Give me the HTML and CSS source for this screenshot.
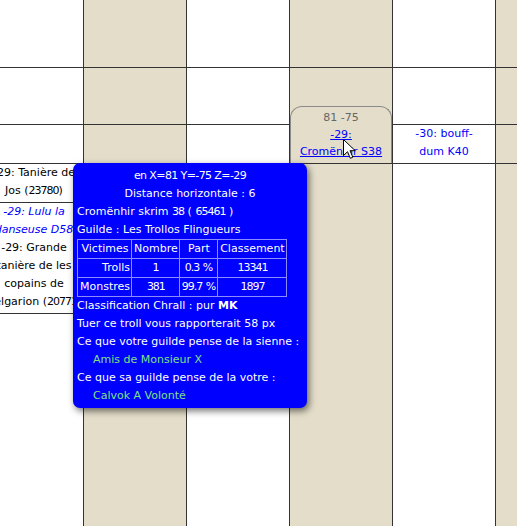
FILE: index.html
```html
<!DOCTYPE html>
<html lang="fr">
<head>
<meta charset="utf-8">
<title>Vue</title>
<link rel="stylesheet" href="styles.css">
</head>
<body>
<div class="view">
<div class="board">
  <div class="cell w"></div><div class="cell b"></div><div class="cell w"></div><div class="cell b"></div><div class="cell w"></div><div class="cell b"></div>

  <div class="cell w"></div><div class="cell b"></div><div class="cell w"></div><div class="cell b"></div><div class="cell w"></div><div class="cell b"></div>

  <div class="cell w"></div>
  <div class="cell b"></div>
  <div class="cell w"></div>
  <div class="cell b hl">
    <div class="hover">
      <div class="coords">81 -75</div>
      <a class="lnk" href="#">-29:<br>Cromënhir S38</a>
    </div>
  </div>
  <div class="cell w"><div class="blue">-30: bouff-<br>dum K40</div></div>
  <div class="cell b"></div>

  <div class="cell w">
    <div class="item">-29: Tanière de<br>Jos (<span class="n">23780</span>)</div>
    <div class="item">
      <div class="blue it">-29: Lulu la<br>danseuse D58</div>
      <div>-29: Grande<br>tanière de les<br>copains de<br>Belgarion (<span class="n">20771</span>)</div>
    </div>
  </div>
  <div class="cell b"></div>
  <div class="cell w"></div>
  <div class="cell b"></div>
  <div class="cell w"></div>
  <div class="cell b"></div>
</div>

<div class="tip">
  <div class="ctr tight">en X=81 Y=-75 Z=-29</div>
  <div class="ctr">Distance horizontale : 6</div>
  <div>Cromënhir skrim <span class="n">38</span> ( <span class="n">65461</span> )</div>
  <div>Guilde : Les Trollos Flingueurs</div>
  <table class="stats">
    <tr><td>Victimes</td><td>Nombre</td><td>Part</td><td>Classement</td></tr>
    <tr><td class="r">Trolls</td><td>1</td><td><span class="n">0.3</span> %</td><td><span class="n">13341</span></td></tr>
    <tr><td>Monstres</td><td><span class="n">381</span></td><td><span class="n">99.7</span> %</td><td><span class="n">1897</span></td></tr>
  </table>
  <div>Classification Chrall : pur <b>MK</b></div>
  <div>Tuer ce troll vous rapporterait 58 px</div>
  <div>Ce que votre guilde pense de la sienne :</div>
  <div class="g">Amis de Monsieur X</div>
  <div>Ce que sa guilde pense de la votre :</div>
  <div class="g">Calvok A Volonté</div>
</div>

<svg class="cursor" width="14" height="21" viewBox="0 0 14 21" aria-hidden="true">
  <path d="M0.5 0.5 L0.5 16.5 L4.5 12.7 L7.3 19.3 L9.8 18.2 L7 11.7 L12.2 11.7 Z" fill="#fff" stroke="#000" stroke-width="1" stroke-linejoin="miter"/>
</svg>
</div>
</body>
</html>
```

FILE: styles.css
```css
html, body {
  margin: 0;
  padding: 0;
  overflow: hidden;
  background: #fff;
}

body {
  font-family: "DejaVu Sans", Verdana, sans-serif;
  font-size: 11px;
  color: #000;
}

.view {
  position: relative;
  width: 517px;
  height: 526px;
  overflow: hidden;
}

.board {
  display: grid;
  grid-template-columns: 98px repeat(5, 102px);
  grid-template-rows: 67px 56px 38px 420px;
  gap: 1px;
  background: #333;
  margin-left: -15px;
  width: max-content;
}

.cell {
  line-height: 18px;
  text-align: center;
}

.cell.w { background: #fff; }
.cell.b { background: #e3ddc9; }

.hl { position: relative; }

.hover {
  position: absolute;
  left: 0;
  right: 0;
  top: -19px;
  bottom: 0;
  background: #e3ddc9;
  border: 1px solid #8a8a8a;
  border-bottom: none;
  border-radius: 12px 12px 0 0;
  padding-top: 2px;
  line-height: 17px;
  text-align: center;
  z-index: 2;
}

.coords { color: #666; }

.lnk {
  color: #00f;
  text-decoration: underline;
}

.blue { color: #00f; }
.it { font-style: italic; }

.item {
  border-bottom: 1px solid #333;
  padding-bottom: 2px;
}

.n { letter-spacing: -1px; }

.tip {
  position: absolute;
  left: 73px;
  top: 163px;
  width: 234px;
  box-sizing: border-box;
  padding: 4px 4px 3px 4px;
  background: #00f;
  color: #fff;
  border-radius: 7px;
  box-shadow: 2px 3px 7px rgba(0, 0, 0, 0.55);
  line-height: 18px;
  white-space: nowrap;
  z-index: 5;
}

.ctr { text-align: center; }
.tight { letter-spacing: -0.6px; }

.stats {
  border-collapse: collapse;
  line-height: 18px;
  font-size: 11px;
  color: #fff;
}

.stats td {
  border: 1px solid #8c8cff;
  padding: 0 1px 0 2px;
  text-align: center;
}

.stats td.r { text-align: right; }

.g {
  color: #7fe07f;
  padding-left: 16px;
}

.cursor {
  position: absolute;
  left: 343px;
  top: 139px;
  z-index: 6;
}
```
